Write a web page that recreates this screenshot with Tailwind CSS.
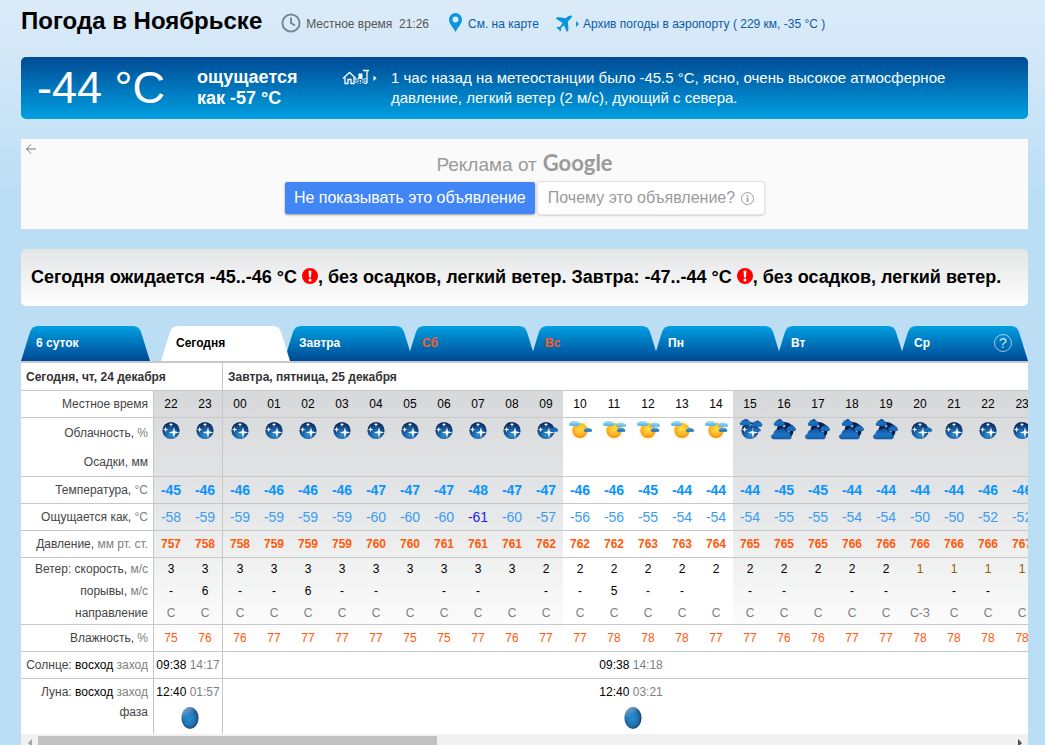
<!DOCTYPE html>
<html lang="ru">
<head>
<meta charset="utf-8">
<title>Погода в Ноябрьске</title>
<script src="https://cdn.jsdelivr.net/npm/@tailwindcss/browser@4"></script>
</head>
<body class="h-screen overflow-hidden bg-[#bbdef5] bg-linear-to-b from-[#dcebf8] to-[#bbdef5] to-[200px] font-['Liberation_Sans',Arial,sans-serif] text-xs text-[#444]">

<!-- Shared symbols for the cloudiness row -->
<svg class="absolute size-0" aria-hidden="true">
  <defs>
    <radialGradient id="gNight" cx=".5" cy=".75" r=".75"><stop offset="0" stop-color="#2f93d4"/><stop offset=".5" stop-color="#17599c"/><stop offset="1" stop-color="#06204f"/></radialGradient>
    <radialGradient id="gSun" cx=".5" cy=".4" r=".6"><stop offset="0" stop-color="#ffe04a"/><stop offset=".6" stop-color="#fdb827"/><stop offset="1" stop-color="#f08c0e"/></radialGradient>
    <radialGradient id="gGlow"><stop offset=".6" stop-color="#ffd977" stop-opacity=".8"/><stop offset="1" stop-color="#ffe9a8" stop-opacity="0"/></radialGradient>
    <linearGradient id="gSky" x2="0" y2="1"><stop offset="0" stop-color="#b4e4f7"/><stop offset="1" stop-color="#4fb0e0"/></linearGradient>
    <linearGradient id="gBlue" x2="0" y2="1"><stop offset="0" stop-color="#54b2e4"/><stop offset="1" stop-color="#0f62ac"/></linearGradient>
    <linearGradient id="gNavy" x2="0" y2="1"><stop offset="0" stop-color="#124c99"/><stop offset=".55" stop-color="#1b74c2"/><stop offset="1" stop-color="#1462b0"/></linearGradient>
    <radialGradient id="gPhase" cx=".45" cy=".5" r=".6"><stop offset="0" stop-color="#2191d0"/><stop offset=".55" stop-color="#2473b1"/><stop offset="1" stop-color="#163c6c"/></radialGradient>
    <linearGradient id="gShine" x2=".5" y2="1"><stop offset="0" stop-color="#a9cbe8" stop-opacity=".85"/><stop offset=".5" stop-color="#a9cbe8" stop-opacity="0"/></linearGradient>
    <linearGradient id="gTab" x2="0" y2="1"><stop offset="0" stop-color="#00a0e1"/><stop offset="1" stop-color="#004894"/></linearGradient>
    <g id="moon">
      <circle cx="17" cy="12.5" r="8.6" fill="url(#gNight)"/>
      <path fill="#fff" d="M20 9l1 4.200 4.400 1.200-4.400 1.200-1 4.700-1.100-4.700-4.200-1.200 4.200-1.200zM11.600 8.800l.7 2 1.900.7-1.900.7-.7 2-.7-2-1.900-.7 1.900-.7zM17 4.200l.6 1.700 1.700.6-1.700.6-.6 1.800-.6-1.800-1.700-.6 1.700-.6z"/>
    </g>
    <g id="sun"><circle cx="17" cy="12.5" r="10" fill="url(#gGlow)"/><circle cx="17" cy="12.5" r="7.6" fill="url(#gSun)"/></g>
    <path id="puff" d="M2 6a2 2 0 0 1-.2-4A3 3 0 0 1 6 .8a3 3 0 0 1 3.6 1.4A2 2 0 0 1 10 6z"/>
    <path id="tall" d="M2 7.500C-.2 7.500-.3 4 1.800 3.800 1.800 2 3.200 1.400 4.200 1.900 5-.2 8.200.2 8.400 2.300c1.300-.2 1.900.8 1.700 1.700C11.600 4.400 11.500 7 9.800 7.500z"/>
    <g id="moonCloud"><use href="#moon"/><use href="#puff" fill="url(#gNavy)" transform="translate(20.500 9)scale(.78)"/></g>
    <g id="sunFew"><use href="#sun"/><use href="#puff" fill="url(#gSky)" transform="translate(6 2.500)scale(1 .9)"/><use href="#puff" fill="url(#gBlue)" transform="translate(21 9.500)scale(.72)"/></g>
    <g id="sunMore"><use href="#sun"/><use href="#puff" fill="url(#gSky)" transform="translate(6 2.500)scale(1 .9)"/><use href="#puff" fill="url(#gSky)" transform="translate(19 4)scale(.9 .8)"/><use href="#puff" fill="url(#gBlue)" transform="translate(20 9.300)scale(.75)"/></g>
    <g id="moonClouds"><use href="#moon"/><use href="#tall" fill="url(#gNavy)" transform="translate(6.500 .5)scale(1.050 .9)"/><use href="#tall" fill="url(#gNavy)" transform="translate(18.500 2)scale(.98 .9)"/><use href="#puff" fill="url(#gNavy)" transform="translate(19.500 9)scale(.75)"/></g>
    <g id="moonOver"><circle cx="18" cy="12.500" r="8.600" fill="#06204f"/><path fill="#fff" d="M17 6l.5 1.500L19 8l-1.500.5L17 10l-.5-1.500L15 8l1.500-.5zM22 10l.5 2 2 .5-2 .5-.5 4-.5-3-2-1 2-1z"/><use href="#tall" fill="url(#gNavy)" transform="translate(19 6.500)scale(.9 .85)"/><use href="#tall" fill="url(#gNavy)" transform="translate(6.500 .500)"/><path fill="url(#gNavy)" stroke="#0d4690" stroke-width=".5" d="M7 21c-3.500 0-3.500-4.500-.3-4.800C7 12.500 9.500 11 12 12c1.500-3 6.500-2 7 1.500 3.500-.5 4.500 2 4 3.500 2.500 1 1.500 4-.5 4z"/></g>
    <g id="alert"><circle cx="8" cy="8" r="8" fill="#f00"/><path d="M6.600 2.800h2.800L9 9.400H7z" fill="#fff"/><circle cx="8" cy="12" r="1.500" fill="#fff"/></g>
  </defs>
</svg>

<main class="mx-auto pl-[21px] pr-[17px]">
  <header class="flex h-[57px] items-start whitespace-nowrap">
    <h1 class="mt-[6px] text-2xl leading-[30px] font-bold text-black">Погода в Ноябрьске</h1>
    <div class="mt-3 ml-[19px] flex h-[22px] items-start gap-[5px]">
      <svg class="mt-px size-5" viewBox="0 0 20 20" fill="none" stroke="#7d868c" stroke-width="2"><circle cx="10" cy="10" r="8.600"/><path d="M10 4.500V10l4 2.500"/></svg>
      <span class="mt-1 leading-4 whitespace-pre text-[#555]">Местное время  21:26</span>
    </div>
    <a href="#" class="mt-3 ml-5 flex h-[22px] items-start gap-[6px] text-[#0c5aa6]">
      <svg class="mt-px h-[19px] w-[13px]" viewBox="0 0 13 19"><path fill="#0a95dc" fill-rule="evenodd" d="M6.500 0A6.500 6.500 0 0 0 0 6.500C0 11 4 14 6.500 19 9 14 13 11 13 6.500A6.500 6.500 0 0 0 6.500 0zm0 3.500a3 3 0 1 1 0 6 3 3 0 0 1 0-6z"/></svg>
      <span class="mt-1 leading-4">См. на карте</span>
    </a>
    <a href="#" class="mt-3 ml-4 flex h-[22px] items-start text-[#0c5aa6]">
      <svg class="mt-[3px] h-[18px] w-[24px]" viewBox="0 0 24 18"><path fill="#0a95dc" d="M.8 3.500L2.300 2l8.400 1.200L13.500 1C14.800.3 16.800.3 17 .7c.2.500-.5 2-1.300 2.900l-2.800 3 .6 8.700-1.700 1.700L9 10.300 6 13l.2 2.200L5 16.500l-1.300-2.300L1.300 13l1.200-1.200 2.300.2L7.500 8z"/><path fill="#0a95dc" d="M21 6l3 3-3 3z"/></svg>
      <span class="mt-1 ml-1 leading-4">Архив погоды в аэропорту ( 229 км, -35 °C )</span>
    </a>
  </header>

  <section class="flex h-[62px] items-center rounded-[5px] bg-linear-to-b from-[#004b95] to-[#00a0e1] pl-4 text-white">
    <p class="w-[160px] shrink-0 text-[45px] leading-[62px] whitespace-nowrap">-44 °C</p>
    <p class="w-[145px] shrink-0 text-lg leading-[21px] font-bold">ощущается<br>как -57 °C</p>
    <a href="#" aria-label="Метеостанция" class="w-[49px] shrink-0 self-start pt-3">
      <svg class="h-[16px] w-[35px]" viewBox="0 0 35 16" fill="none" stroke="#fff" stroke-width="1.300"><path d="M1 9.500L7.500 3.500 14 9.500M3 8.500V14.500h3v-4h3v4h3V8.500"/><path d="M14 10v4M16 9v5.500M18.500 11v3.500M21 10v4.500M23 9v5" stroke-dasharray="1.500 1"/><path fill="#fff" stroke="none" d="M16.500 4.500h4V10h-4z"/><path d="M25 1.500V14M22 14.300h3M21 1.500h6"/><path d="M31.500 6.500l3 2.800-3 2.800z" fill="#fff" stroke="none"/></svg>
    </a>
    <p class="max-w-[570px] text-[15px] leading-5">1 час назад на метеостанции было -45.5 °C, ясно, очень высокое атмосферное давление, легкий ветер (2 м/с), дующий с севера.</p>
  </section>

  <section class="relative mt-5 flex h-[90px] flex-col items-center bg-[#fafafa] pt-3">
    <button aria-label="Назад" class="absolute top-1 left-1"><svg class="size-3" viewBox="0 0 12 12" fill="none" stroke="#777" stroke-width="1"><path d="M11 6H1.500M6 1.500L1.500 6 6 10.500"/></svg></button>
    <p class="flex h-[31px] items-start gap-[6px] text-[19px] leading-7 text-[#9a9a9a]">Реклама от <span class="font-['Lato',sans-serif] text-[22px] leading-[24px] font-bold">Google</span></p>
    <div class="flex gap-[3px] whitespace-nowrap">
      <button class="h-8 rounded-xs bg-[#4285f4] px-[9px] text-base text-white shadow-sm shadow-black/30">Не показывать это объявление</button>
      <button class="flex h-8 items-center gap-[6px] rounded-xs bg-white px-[10px] text-base text-[#9a9aa0] shadow-sm ring-1 shadow-black/30 ring-[#e4e4e4]">Почему это объявление?
        <svg class="size-[13px]" viewBox="0 0 13 13" fill="none" stroke="#9a9aa0"><circle cx="6.500" cy="6.500" r="6"/><path stroke-width="1.600" d="M6.500 5.500V10M6.500 3v1.500"/></svg></button>
    </div>
  </section>

  <section class="mt-5 flex h-[57px] items-center rounded-[5px] bg-linear-to-b from-[#e4e5e6] to-[#fefefe] pb-[2px] pl-[10px] text-lg font-bold whitespace-nowrap text-black">
    <p>Сегодня ожидается -45..-46 °C <svg class="-mt-1 inline size-4" viewBox="0 0 16 16"><use href="#alert"/></svg>, без осадков, легкий ветер. Завтра: -47..-44 °C <svg class="-mt-1 inline size-4" viewBox="0 0 16 16"><use href="#alert"/></svg>, без осадков, легкий ветер.</p>
  </section>

  <nav id="tabs" class="mt-5 flex h-[35px] text-[12px] font-bold text-white"></nav>

  <section class="relative border-t-2 border-[#c8c8c8] bg-white">
    <div class="overflow-hidden">
      <table class="w-[1018px] table-fixed border-separate border-spacing-0">
        <colgroup id="cols"></colgroup>
        <tbody id="grid"></tbody>
      </table>
    </div>
    <div class="flex h-[17px] items-center bg-[#f1f1f1]">
      <span class="flex w-[17px] justify-center"><svg class="h-2 w-1" viewBox="0 0 4 8"><path d="M4 0v8L0 4z" fill="#a3a3a3"/></svg></span>
      <span class="flex flex-1"><i class="h-[13px] w-[41%] bg-[#c1c1c1]"></i></span>
      <span class="flex w-[17px] justify-center"><svg class="h-2 w-1" viewBox="0 0 4 8"><path d="M0 0v8l4-4z" fill="#505050"/></svg></span>
    </div>
  </section>
</main>

<script>
const tabs = ['6 суток', 'Сегодня', 'Завтра', 'Сб', 'Вс', 'Пн', 'Вт', 'Ср'];
document.getElementById('tabs').innerHTML = tabs.map((t, i) => {
  const active = i === 1;
  const place = i === 0 ? 'mr-[11px]' : active ? 'z-10' : '-ml-[6px]';
  const color = active ? 'text-black' : t === 'Сб' || t === 'Вс' ? 'text-[#ff5a1f]' : 'text-white';
  const help = i === 7 ? '<span class="mr-4 flex size-[18px] items-center justify-center rounded-full border border-white/60 text-sm font-normal text-white/80">?</span>' : '';
  return `<a href="#" class="relative flex flex-1 items-center justify-between pb-[2px] ${place} ${color}">
    <svg class="absolute inset-0 size-full" viewBox="0 0 129 35" preserveAspectRatio="none"><path d="M0 35L9 6Q11 0 17 0H112Q118 0 120 6L129 35Z" fill="${active ? '#fff' : 'url(#gTab)'}"/></svg>
    <span class="relative pl-[15px]">${t}</span><span class="relative">${help}</span></a>`;
}).join('');

const shade = 'bg-linear-to-b from-[#d8d9db] from-10% via-[#e4e5e6] via-36% to-white to-76%';
document.getElementById('cols').outerHTML =
  `<colgroup><col class="w-[132px]"></colgroup>
   <colgroup class="${shade}"><col class="w-[35px]"><col class="w-[34px]"></colgroup>
   <colgroup class="${shade}"><col class="w-[35px]"><col span="9" class="w-[34px]"></colgroup>
   <colgroup><col span="5" class="w-[34px]"></colgroup>
   <colgroup class="${shade}"><col span="9" class="w-[34px]"></colgroup>`;

const list = s => s.split(',');
const data = {
  time: list('22,23,00,01,02,03,04,05,06,07,08,09,10,11,12,13,14,15,16,17,18,19,20,21,22,23'),
  sky: list('moon,moon,moon,moon,moon,moon,moon,moon,moon,moon,moon,moonCloud,sunFew,sunMore,sunMore,sunFew,sunMore,moonClouds,moonOver,moonOver,moonOver,moonOver,moonCloud,moon,moon,moon'),
  temp: list('-45,-46,-46,-46,-46,-46,-47,-47,-47,-48,-47,-47,-46,-46,-45,-44,-44,-44,-45,-45,-44,-44,-44,-44,-46,-46'),
  feels: list('-58,-59,-59,-59,-59,-59,-60,-60,-60,-61,-60,-57,-56,-56,-55,-54,-54,-54,-55,-55,-54,-54,-50,-50,-52,-52'),
  press: list('757,758,758,759,759,759,760,760,761,761,761,762,762,762,763,763,764,765,765,765,766,766,766,766,766,767'),
  wind: list('3,3,3,3,3,3,3,3,3,3,3,2,2,2,2,2,2,2,2,2,2,2,1,1,1,1'),
  gust: list('-,6,-,-,6,-,-,,-,-,,-,-,5,-,-,,-,-,,-,-,,-,-,'),
  dir: list('С,С,С,С,С,С,С,С,С,С,С,С,С,С,С,С,С,С,С,С,С,С,С-З,С,С,С'),
  hum: list('75,76,76,77,77,77,77,75,75,77,76,77,77,78,78,78,77,77,76,76,77,77,78,78,78,78')
};
const edge = i => i === 0 || i === 2 ? 'border-l border-[#c8c8c8]' : 'border-[#c8c8c8]';
const unit = t => `<span class="text-[#808080]">${t}</span>`;
const row = (height, line, label, values, style, draw = v => v) =>
  `<tr class="${height}"><th scope="row" class="border-[#c8c8c8] bg-white p-0 pr-[5px] text-right font-normal whitespace-nowrap ${line}">${label}</th>` +
  values.map((v, i) => `<td class="p-0 text-center whitespace-nowrap ${edge(i)} ${line} ${typeof style === 'string' ? style : style(v)}">${draw(v)}</td>`).join('') + '</tr>';
const rise = (height, line, label, a, b) =>
  `<tr class="${height} align-top"><th scope="row" class="border-[#c8c8c8] bg-white p-0 pr-[5px] text-right leading-5 font-normal whitespace-nowrap ${line}">${label}</th>
   <td colspan="2" class="border-l border-[#c8c8c8] bg-white p-0 text-center leading-5 whitespace-nowrap ${line}">${a}</td>
   <td colspan="24" class="border-l border-[#c8c8c8] bg-white p-0 text-center leading-5 whitespace-nowrap ${line}">${b}</td></tr>`;
const times = (up, down) => `<span class="text-black">${up}</span> <span class="text-[#808080]">${down}</span>`;
const phase = '<div class="flex justify-center pt-[5px] pl-1"><svg class="h-[22px] w-[18px]" viewBox="0 0 18 22"><ellipse cx="9" cy="11" rx="8.600" ry="11" fill="url(#gPhase)"/><ellipse cx="9" cy="11" rx="8.600" ry="11" fill="url(#gShine)"/></svg></div>';
const rule = 'border-b';

document.getElementById('grid').innerHTML =
  `<tr class="h-[28px] text-left text-[#333]"><th colspan="3" class="border-b border-[#c8c8c8] bg-white p-0 pl-[5px]">Сегодня, чт, 24 декабря</th><th colspan="24" class="border-b border-l border-[#c8c8c8] bg-white p-0 pl-[5px]">Завтра, пятница, 25 декабря</th></tr>` +
  row('h-[27px]', rule, 'Местное время', data.time, 'text-black') +
  row('h-[29px]', '', 'Облачность, ' + unit('%'), data.sky, 'align-top', v => `<svg class="block h-6 w-[34px]" viewBox="0 0 34 24"><use href="#${v}"/></svg>`) +
  row('h-[30px]', rule, 'Осадки, мм', data.time, '', () => '') +
  row('h-[27px]', rule, 'Температура, ' + unit('°C'), data.temp, 'text-sm font-bold text-[#0a94ff]') +
  row('h-[27px]', rule, 'Ощущается как, ' + unit('°C'), data.feels, v => v === '-61' ? 'text-sm text-[#2020f0]' : 'text-sm text-[#3a9cf5]') +
  row('h-[27px]', rule, 'Давление, ' + unit('мм рт. ст.'), data.press, 'font-bold text-[#ff5a0a]') +
  row('h-[22px]', '', 'Ветер: скорость, ' + unit('м/с'), data.wind, v => v === '1' ? 'text-[#8a6000]' : 'text-black') +
  row('h-[22px]', '', 'порывы, ' + unit('м/с'), data.gust, 'text-black') +
  row('h-[23px]', rule, 'направление', data.dir, 'text-[#808080]') +
  row('h-[27px]', rule, 'Влажность, ' + unit('%'), data.hum, 'text-[#ff5a0a]') +
  rise('h-[27px]', rule + ' pt-[3px]', 'Солнце: <span class="text-black">восход</span> ' + unit('заход'), times('09:38', '14:17'), times('09:38', '14:18')) +
  rise('h-[55px]', 'pt-[3px]', 'Луна: <span class="text-black">восход</span> ' + unit('заход') + '<br>фаза', times('12:40', '01:57') + phase, times('12:40', '03:21') + phase);
</script>
</body>
</html>
